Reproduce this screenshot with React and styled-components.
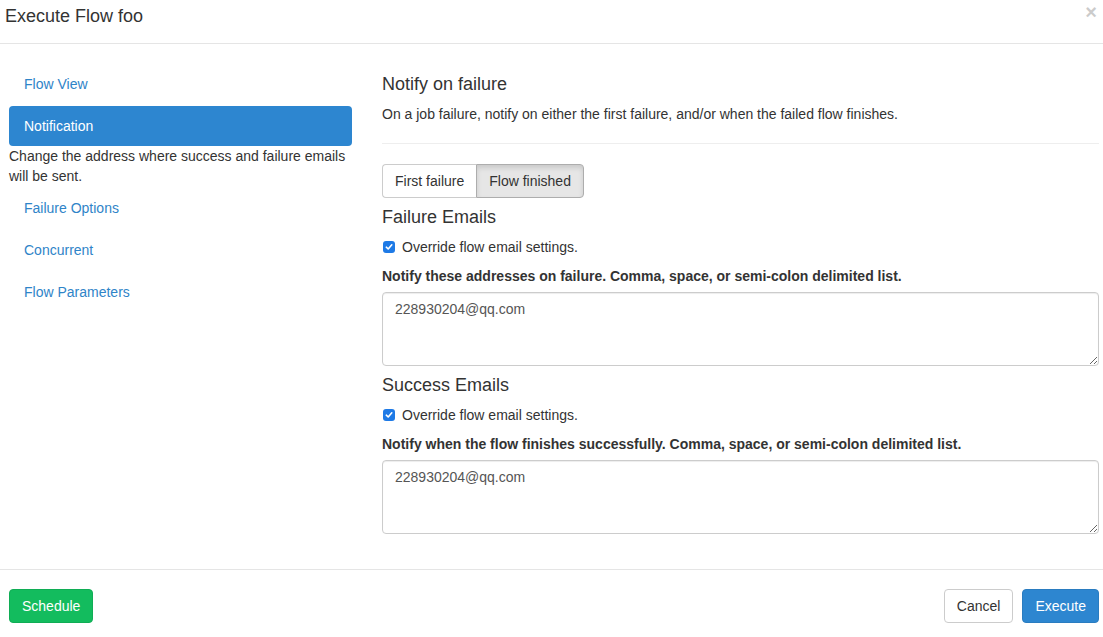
import styled, { createGlobalStyle } from "styled-components";

const GlobalStyle = createGlobalStyle`
  html, body {
    margin: 0;
    padding: 0;
    background: #fff;
  }
  body {
    font-family: "Liberation Sans", Arial, sans-serif;
    font-size: 14px;
    line-height: 20px;
    color: #333;
  }
  * {
    box-sizing: border-box;
  }
`;

const navItems = ["Flow View", "Notification", "Failure Options", "Concurrent", "Flow Parameters"];

function CheckRow() {
  return (
    <CheckLine>
      <CheckBox>
        <svg width="8" height="8" viewBox="0 0 8 8">
          <path d="M1.3 4.2 L3.2 6 L6.8 1.8" fill="none" stroke="#fff" strokeWidth="1.6" strokeLinecap="round" strokeLinejoin="round" />
        </svg>
      </CheckBox>
      Override flow email settings.
    </CheckLine>
  );
}

export default function App() {
  return (
    <Modal>
      <GlobalStyle />
      <Header>
        <Title>Execute Flow foo</Title>
        <Close>×</Close>
      </Header>

      <Body>
        <Sidebar>
          {navItems.map((item) => (
            <div key={item}>
              <Pill $active={item === "Notification"}>{item}</Pill>
              {item === "Notification" && (
                <PillNote>Change the address where success and failure emails will be sent.</PillNote>
              )}
            </div>
          ))}
        </Sidebar>

        <Panel>
          <Heading $top={10}>Notify on failure</Heading>
          <Lead>On a job failure, notify on either the first failure, and/or when the failed flow finishes.</Lead>
          <Rule />
          <BtnGroup>
            <GroupBtn>First failure</GroupBtn>
            <GroupBtn $active>Flow finished</GroupBtn>
          </BtnGroup>

          <Heading $top={9}>Failure Emails</Heading>
          <CheckRow />
          <FieldLabel>Notify these addresses on failure. Comma, space, or semi-colon delimited list.</FieldLabel>
          <TextArea defaultValue="228930204@qq.com" />

          <Heading $top={9}>Success Emails</Heading>
          <CheckRow />
          <FieldLabel>Notify when the flow finishes successfully. Comma, space, or semi-colon delimited list.</FieldLabel>
          <TextArea defaultValue="228930204@qq.com" />
        </Panel>
      </Body>

      <Footer>
        <Button $variant="success">Schedule</Button>
        <Right>
          <Button>Cancel</Button>
          <Button $variant="primary">Execute</Button>
        </Right>
      </Footer>
    </Modal>
  );
}

const Modal = styled.div`
  width: 1103px;
  height: 637px;
  background: #fff;
  overflow: hidden;
`;

const Header = styled.div`
  height: 44px;
  padding: 6px 6px 0 5px;
  border-bottom: 1px solid #e5e5e5;
  display: flex;
  justify-content: space-between;
  align-items: flex-start;
`;

const Title = styled.h4`
  margin: 0;
  font-size: 18px;
  line-height: 20px;
  font-weight: 500;
  color: #333;
`;

const Close = styled.span`
  font-size: 20px;
  line-height: 16px;
  font-weight: bold;
  color: #000;
  opacity: 0.2;
  margin-top: -2px;
`;

const Body = styled.div`
  display: flex;
  gap: 30px;
  padding: 20px 4px 35px 9px;
  border-bottom: 1px solid #e5e5e5;
`;

const Sidebar = styled.div`
  width: 343px;
  flex-shrink: 0;
  display: flex;
  flex-direction: column;
  gap: 2px;
`;

const Pill = styled.div`
  padding: 10px 15px;
  line-height: 20px;
  border-radius: 4px;
  color: ${(p) => (p.$active ? "#fff" : "#2f84c8")};
  background: ${(p) => (p.$active ? "#2d86d0" : "transparent")};
`;

const PillNote = styled.div`
  color: #333;
  line-height: 20px;
  padding-right: 6px;
`;

const Panel = styled.div`
  flex: 1;
  min-width: 0;
  display: flex;
  flex-direction: column;
`;

const Heading = styled.h4`
  margin: ${(p) => p.$top}px 0 10px;
  font-size: 18px;
  line-height: 20px;
  font-weight: 500;
  color: #333;
`;

const Lead = styled.p`
  margin: 0 0 19px;
`;

const Rule = styled.hr`
  width: 100%;
  margin: 0 0 20px;
  border: 0;
  border-top: 1px solid #eee;
`;

const BtnGroup = styled.div`
  display: flex;
  align-self: flex-start;
`;

const GroupBtn = styled.div`
  padding: 6px 12px;
  line-height: 20px;
  border: 1px solid ${(p) => (p.$active ? "#adadad" : "#ccc")};
  background: ${(p) => (p.$active ? "#e6e6e6" : "#fff")};
  box-shadow: ${(p) => (p.$active ? "inset 0 3px 5px rgba(0,0,0,0.125)" : "none")};
  color: #333;
  &:first-child {
    border-radius: 4px 0 0 4px;
    border-right: 0;
  }
  &:last-child {
    border-radius: 0 4px 4px 0;
  }
`;

const CheckLine = styled.div`
  display: flex;
  align-items: center;
  gap: 7px;
  padding-left: 1px;
  line-height: 20px;
  margin-bottom: 9px;
`;

const CheckBox = styled.span`
  width: 12px;
  height: 12px;
  border-radius: 3px;
  background: #1e7ae6;
  display: inline-flex;
  align-items: center;
  justify-content: center;
`;

const FieldLabel = styled.div`
  font-weight: bold;
  line-height: 20px;
  margin-bottom: 6px;
`;

const TextArea = styled.textarea`
  display: block;
  width: 100%;
  height: 74px;
  padding: 6px 12px;
  font-family: "Liberation Sans", Arial, sans-serif;
  font-size: 14px;
  line-height: 20px;
  color: #555;
  border: 1px solid #ccc;
  border-radius: 4px;
  box-shadow: inset 0 1px 1px rgba(0, 0, 0, 0.075);
  resize: vertical;
  outline: none;
`;

const Footer = styled.div`
  display: flex;
  justify-content: space-between;
  padding: 19px 4px 0 9px;
`;

const Right = styled.div`
  display: flex;
  gap: 9px;
`;

const variants = {
  success: { bg: "#13bc5e", border: "#10ad55", color: "#fff" },
  primary: { bg: "#2d86d0", border: "#2a7cc0", color: "#fff" },
  default: { bg: "#fff", border: "#ccc", color: "#333" },
};

const Button = styled.div`
  padding: 6px 12px;
  line-height: 20px;
  border-radius: 4px;
  border: 1px solid ${(p) => variants[p.$variant || "default"].border};
  background: ${(p) => variants[p.$variant || "default"].bg};
  color: ${(p) => variants[p.$variant || "default"].color};
`;
